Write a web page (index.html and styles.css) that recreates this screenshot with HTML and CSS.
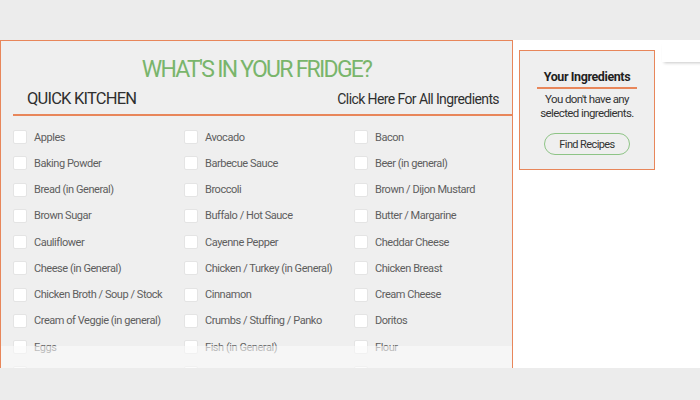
FILE: index.html
```html
<!DOCTYPE html>
<html lang="en">
<head>
  <meta charset="UTF-8" />
  <title>Quick Kitchen</title>
  <link rel="stylesheet" href="styles.css">
</head>
<body>
  <div class="topband"></div>

  <div class="stage">
    <section class="fridge">
      <h1>WHAT'S IN YOUR FRIDGE?</h1>
      <div class="bar">
        <h2>QUICK KITCHEN</h2>
        <a class="all-link" href="#">Click Here For All Ingredients</a>
      </div>

      <ul class="items">
        <li><span class="box"></span>Apples</li>
        <li><span class="box"></span>Avocado</li>
        <li><span class="box"></span>Bacon</li>
        <li><span class="box"></span>Baking Powder</li>
        <li><span class="box"></span>Barbecue Sauce</li>
        <li><span class="box"></span>Beer (in general)</li>
        <li><span class="box"></span>Bread (in General)</li>
        <li><span class="box"></span>Broccoli</li>
        <li><span class="box"></span>Brown / Dijon Mustard</li>
        <li><span class="box"></span>Brown Sugar</li>
        <li><span class="box"></span>Buffalo / Hot Sauce</li>
        <li><span class="box"></span>Butter / Margarine</li>
        <li><span class="box"></span>Cauliflower</li>
        <li><span class="box"></span>Cayenne Pepper</li>
        <li><span class="box"></span>Cheddar Cheese</li>
        <li><span class="box"></span>Cheese (in General)</li>
        <li><span class="box"></span>Chicken / Turkey (in General)</li>
        <li><span class="box"></span>Chicken Breast</li>
        <li><span class="box"></span>Chicken Broth / Soup / Stock</li>
        <li><span class="box"></span>Cinnamon</li>
        <li><span class="box"></span>Cream Cheese</li>
        <li><span class="box"></span>Cream of Veggie (in general)</li>
        <li><span class="box"></span>Crumbs / Stuffing / Panko</li>
        <li><span class="box"></span>Doritos</li>
        <li><span class="box"></span>Eggs</li>
        <li><span class="box"></span>Fish (in General)</li>
        <li><span class="box"></span>Flour</li>
        <li><span class="box"></span></li>
        <li><span class="box"></span></li>
        <li><span class="box"></span></li>
      </ul>

      <div class="fade"></div>
    </section>

    <aside class="side">
      <div class="picked">
        <h3>Your Ingredients</h3>
        <p>You don't have any selected ingredients.</p>
        <button class="find-btn">Find Recipes</button>
      </div>
    </aside>

    <div class="edge-shadow"></div>
  </div>

  <div class="bottomband"></div>
</body>
</html>
```

FILE: styles.css
```css
:root {
  --page-bg: #ececec;
  --panel-bg: #efefef;
  --orange: #e8865a;
  --green: #79b56b;
  --dark: #2f2f2f;
  --label: #5e5e5e;
}

* { box-sizing: border-box; margin: 0; padding: 0; }

body {
  font-family: Roboto, 'Liberation Sans', sans-serif;
  background: var(--page-bg);
  width: 700px;
  height: 400px;
  overflow: hidden;
}

.topband { height: 40px; }
.bottomband { height: 32px; }

.stage {
  height: 328px;
  background: #fff;
  display: flex;
  align-items: flex-start;
  position: relative;
}

.fridge {
  width: 513px;
  height: 328px;
  background: var(--panel-bg);
  border: 1px solid var(--orange);
  border-bottom: none;
  overflow: hidden;
  position: relative;
}

h1 {
  text-align: center;
  color: var(--green);
  font-size: 23px;
  font-weight: normal;
  letter-spacing: -1.75px;
  margin-top: 16px;
  line-height: 26px;
}

.bar {
  display: flex;
  justify-content: space-between;
  align-items: baseline;
  margin: 6px 0 0 12px;
  padding: 0 13px 6px 14px;
  border-bottom: 2px solid var(--orange);
}

.bar h2 {
  font-size: 16.5px;
  font-weight: normal;
  letter-spacing: -0.8px;
  color: var(--dark);
}

.all-link {
  font-size: 14px;
  letter-spacing: -0.6px;
  color: var(--dark);
  text-decoration: none;
}

.items {
  list-style: none;
  display: grid;
  grid-template-columns: 171px 170px 170px;
  grid-auto-rows: 26.25px;
  padding: 8px 0 0 12px;
}

.items li {
  display: flex;
  align-items: center;
  gap: 7px;
  font-size: 11px;
  letter-spacing: -0.45px;
  color: var(--label);
  white-space: nowrap;
}

.box {
  width: 14px;
  height: 14px;
  background: #fff;
  border: 1px solid #e4e4e4;
  border-radius: 2px;
  flex: none;
}

.fade {
  position: absolute;
  left: 0;
  right: 0;
  bottom: 0;
  height: 22px;
  background: rgba(250, 250, 250, 0.6);
}

.side {
  padding: 10px 0 0 6px;
}

.picked {
  width: 136px;
  height: 120px;
  background: var(--panel-bg);
  border: 1px solid var(--orange);
  display: flex;
  flex-direction: column;
  align-items: center;
  text-align: center;
  padding-top: 18px;
}

.picked h3 {
  font-size: 12.5px;
  font-weight: bold;
  letter-spacing: -0.4px;
  color: #1f1f1f;
  width: 100px;
  padding-bottom: 3px;
  border-bottom: 2px solid var(--orange);
}

.picked p {
  font-size: 11.5px;
  letter-spacing: -0.6px;
  line-height: 14px;
  color: #333;
  width: 110px;
  margin-top: 3px;
}

.find-btn {
  margin-top: 13px;
  width: 86px;
  height: 22px;
  border: 1px solid #8ec486;
  border-radius: 11px;
  background: var(--panel-bg);
  font-family: inherit;
  font-size: 11px;
  letter-spacing: -0.6px;
  color: #333;
}

.edge-shadow {
  position: absolute;
  top: 0;
  left: 662px;
  width: 60px;
  height: 22px;
  background: #fff;
  box-shadow: 0 3px 3px -2px rgba(0, 0, 0, 0.22);
}
```
